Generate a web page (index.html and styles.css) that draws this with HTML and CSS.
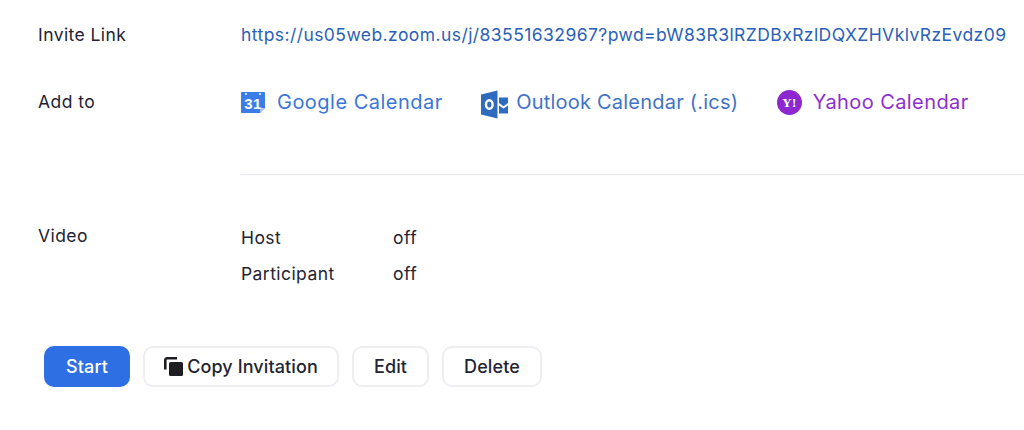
FILE: index.html
```html
<!DOCTYPE html>
<html lang="en">
<head>
<meta charset="utf-8">
<title>Meeting</title>
<link rel="stylesheet" href="styles.css">
</head>
<body>
<main class="page">
  <section class="row row-invite">
    <div class="label">Invite Link</div>
    <a class="url" href="#">https://us05web.zoom.us/j/83551632967?pwd=bW83R3lRZDBxRzlDQXZHVklvRzEvdz09</a>
  </section>
  <section class="row row-add">
    <div class="label">Add to</div>
    <div class="cals">
      <a class="cal cal-google" href="#">
        <svg class="ico" width="24" height="24" viewBox="0 0 24 24"><path d="M0 3a1 1 0 0 1 1-1h22a1 1 0 0 1 1 1v15l-5 5H1a1 1 0 0 1-1-1z" fill="#3b7de8"/><path d="M19 23v-4a1 1 0 0 1 1-1h4z" fill="#a9c6f4"/><circle cx="5" cy="4" r="1" fill="#fff"/><circle cx="19" cy="4" r="1" fill="#fff"/><text x="12" y="19" class="ico-31">31</text></svg>
        <span>Google Calendar</span>
      </a>
      <a class="cal cal-outlook" href="#">
        <svg class="ico" width="27" height="29" viewBox="0 0 27 29"><path d="M0 4.500 16.500 0.500v28L0 24.500z" fill="#2f6cc0"/><path d="M18 7.500H27v5.500l-4.500 3.300L18 13z" fill="#2f6cc0"/><path d="M18 15.500l4.500 3 4.500-3V23.500H18z" fill="#2f6cc0"/><ellipse cx="8.300" cy="14.500" rx="3.300" ry="4.300" fill="none" stroke="#fff" stroke-width="2.400"/></svg>
        <span>Outlook Calendar (.ics)</span>
      </a>
      <a class="cal cal-yahoo" href="#">
        <svg class="ico" width="25" height="25" viewBox="0 0 25 25"><circle cx="12.500" cy="12.500" r="12.500" fill="#8d27cf"/><text x="12.500" y="16.500" class="ico-y">Y!</text></svg>
        <span>Yahoo Calendar</span>
      </a>
    </div>
  </section>
  <hr class="divider">
  <section class="row row-video">
    <div class="label">Video</div>
    <dl class="video">
      <dt>Host</dt><dd>off</dd>
      <dt>Participant</dt><dd>off</dd>
    </dl>
  </section>
  <div class="actions">
    <button class="btn btn-primary">Start</button>
    <button class="btn btn-copy">
      <svg class="copy-ico" width="19" height="19" viewBox="0 0 19 19"><path d="M1.300 12.500V3A1.700 1.700 0 0 1 3 1.300H13" fill="none" stroke="#1d1d22" stroke-width="2.600"/><rect x="5" y="5" width="14" height="14" rx="1.500" fill="#1d1d22"/></svg>
      Copy Invitation
    </button>
    <button class="btn btn-edit">Edit</button>
    <button class="btn btn-delete">Delete</button>
  </div>
</main>
</body>
</html>
```

FILE: styles.css
```css
* { box-sizing: border-box; }
html, body { margin: 0; padding: 0; background: #fff; }
body { font-family: Inter, "Liberation Sans", sans-serif; color: #232333; width: 1024px; height: 430px; overflow: hidden; }
a { text-decoration: none; }
.page { padding: 24px 0 0 38px; }
.row { display: grid; grid-template-columns: 203px 1fr; }
.label { font-size: 17.500px; letter-spacing: .43px; line-height: 22px; }
.url { font-size: 17.500px; letter-spacing: .43px; line-height: 22px; color: #2b5fb8; white-space: nowrap; }
.row-add { margin-top: 46px; align-items: start; }
.row-add .label { margin-top: -1px; }
.cals { display: flex; gap: 38.500px; margin-top: -5px; align-items: center; height: 30px; }
.cal { display: flex; align-items: center; font-size: 20px; white-space: nowrap; }
.cal-google { color: #3a76d8; gap: 12px; letter-spacing: .48px; }
.cal-outlook { color: #3f73c7; gap: 8px; letter-spacing: .22px; }
.cal-yahoo { color: #8d2fd0; gap: 11px; letter-spacing: .42px; }
.ico { flex: none; display: block; }
.cal-outlook .ico { margin-top: 5px; }
.ico-31 { font-family: "Liberation Sans", sans-serif; font-weight: 700; font-size: 15px; fill: #fff; text-anchor: middle; }
.ico-y { font-family: "Liberation Serif", serif; font-weight: 700; font-size: 13px; fill: #fff; text-anchor: middle; }
.divider { border: 0; height: 1px; background: #e8e8ef; margin: 57px 0 0 203px; }
.row-video { margin-top: 50px; }
.video { display: grid; grid-template-columns: 152px 1fr; row-gap: 14px; margin: 2px 0 0; font-size: 17.500px; letter-spacing: .43px; line-height: 22px; }
.video dd { margin: 0; }
.actions { display: flex; gap: 13px; margin: 61px 0 0 6px; }
.btn { height: 41px; border-radius: 10px; border: 2px solid #eeeef2; background: #fff; font-family: inherit; font-size: 18px; letter-spacing: .1px; font-weight: 500; color: #232333; padding: 0; display: flex; align-items: center; justify-content: center; }
.btn-primary { width: 86px; background: #2f6fe4; border-color: #2f6fe4; color: #fff; }
.btn-copy { width: 196px; gap: 4px; }
.btn-edit { width: 77px; }
.btn-delete { width: 100px; }
```
